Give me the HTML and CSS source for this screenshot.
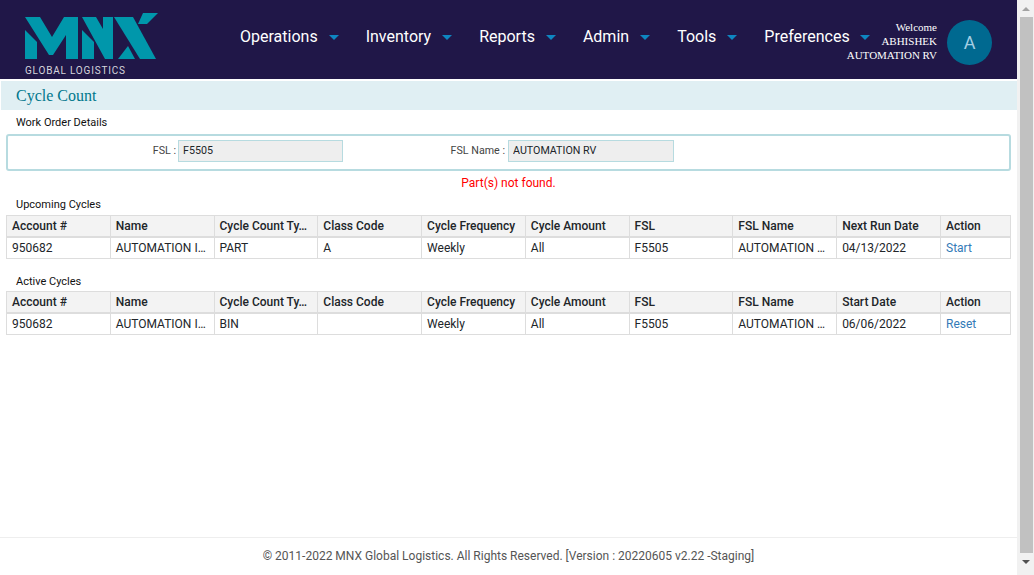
FILE: index.html
```html
<!DOCTYPE html>
<html lang="en">
<head>
    <meta charset="UTF-8">
    <meta name="viewport" content="width=device-width, initial-scale=1.0">
    <title>Cycle Count</title>
    <link rel="stylesheet" href="styles.css">
</head>
<body>
    <div class="page">
        <header class="topbar">
            <div class="logo">
                <svg class="logo-mark" width="134" height="47" viewBox="0 0 134 47">
                    <polygon fill="#0097ab" points="0,17 12,29 12,46 0,46"/>
                    <polygon fill="#0097ab" points="0,4 15,4 27,24 39,4 53,4 53,46 41,46 41,22 28,42 24,42"/>
                    <polygon fill="#0097ab" points="57,17 69,29 69,46 57,46"/>
                    <polygon fill="#0097ab" points="57,4 71,4 78,16 78,4 88,4 88,46 80,46"/>
                    <polygon fill="#0097ab" points="89,4 108,4 131,46 115,46"/>
                    <polygon fill="#0097ab" points="93,46 103,33 110,46"/>
                    <polygon fill="#0097ab" points="118,0 133,0 122,11 113,11"/>
                </svg>
                <span class="logo-text">GLOBAL LOGISTICS</span>
            </div>
            <nav class="menu">
                <a class="menu-item">Operations</a>
                <a class="menu-item">Inventory</a>
                <a class="menu-item">Reports</a>
                <a class="menu-item">Admin</a>
                <a class="menu-item">Tools</a>
                <a class="menu-item">Preferences</a>
            </nav>
            <div class="user">
                <div class="user-text">Welcome<br>ABHISHEK<br>AUTOMATION RV</div>
                <div class="avatar">A</div>
            </div>
        </header>

        <h1 class="title">Cycle Count</h1>

        <main class="content">
            <h2 class="section">Work Order Details</h2>
            <div class="details">
                <label class="fsl-label">FSL :</label>
                <input class="field" type="text" value="F5505" readonly>
                <label class="name-label">FSL Name :</label>
                <input class="field field-name" type="text" value="AUTOMATION RV" readonly>
            </div>
            <p class="error">Part(s) not found.</p>

            <h2 class="section">Upcoming Cycles</h2>
            <table class="grid">
                <thead>
                    <tr>
                        <th>Account #</th><th>Name</th><th>Cycle Count Ty…</th><th>Class Code</th><th>Cycle Frequency</th><th>Cycle Amount</th><th>FSL</th><th>FSL Name</th><th>Next Run Date</th><th class="col-action">Action</th>
                    </tr>
                </thead>
                <tbody>
                    <tr>
                        <td>950682</td><td>AUTOMATION I…</td><td>PART</td><td>A</td><td>Weekly</td><td>All</td><td>F5505</td><td>AUTOMATION …</td><td>04/13/2022</td><td><a class="action">Start</a></td>
                    </tr>
                </tbody>
            </table>

            <h2 class="section section-active">Active Cycles</h2>
            <table class="grid grid-active">
                <thead>
                    <tr>
                        <th>Account #</th><th>Name</th><th>Cycle Count Ty…</th><th>Class Code</th><th>Cycle Frequency</th><th>Cycle Amount</th><th>FSL</th><th>FSL Name</th><th>Start Date</th><th class="col-action">Action</th>
                    </tr>
                </thead>
                <tbody>
                    <tr>
                        <td>950682</td><td>AUTOMATION I…</td><td>BIN</td><td></td><td>Weekly</td><td>All</td><td>F5505</td><td>AUTOMATION …</td><td>06/06/2022</td><td><a class="action">Reset</a></td>
                    </tr>
                </tbody>
            </table>
        </main>

        <footer class="footer">© 2011-2022 MNX Global Logistics. All Rights Reserved. [Version : 20220605 v2.22 -Staging]</footer>
    </div>

    <div class="scrollbar">
        <div class="arrow arrow-up"></div>
        <div class="thumb"></div>
        <div class="arrow arrow-down"></div>
    </div>
</body>
</html>
```

FILE: styles.css
```css
html, body {
    height: 100%;
}
body {
    margin: 0;
    display: flex;
    overflow: hidden;
    font-family: Roboto, Arial, sans-serif;
    font-size: 12px;
    color: #212529;
    background-color: #fff;
}
.page {
    width: 1017px;
    height: 575px;
    display: flex;
    flex-direction: column;
}

/* header */
.topbar {
    height: 79px;
    display: flex;
    background-color: #201748;
    color: #fff;
}
.logo {
    flex: none;
    width: 240px;
    padding: 13px 0 0 25px;
    box-sizing: border-box;
}
.logo-mark {
    display: block;
}
.logo-text {
    display: block;
    margin-top: 4px;
    font-size: 10px;
    line-height: 14px;
    letter-spacing: 0.8px;
    color: #d5d5dc;
    white-space: nowrap;
}
/* the last caret runs in under the user text, as it does on the real page */
.menu {
    flex: none;
    width: 580px;
    display: flex;
    gap: 27px;
    padding-top: 27px;
    box-sizing: border-box;
}
.menu-item {
    font-size: 16px;
    line-height: 19px;
    color: #fff;
    white-space: nowrap;
}
.menu-item::after {
    content: "";
    display: inline-block;
    margin-left: 11px;
    vertical-align: 2px;
    border-left: 5px solid transparent;
    border-right: 5px solid transparent;
    border-top: 5px solid #0e86c1;
}
.menu-item:last-child::after {
    margin-left: 10px;
}
.user {
    flex: none;
    display: flex;
    gap: 10px;
    margin-left: auto;
    padding: 20px 25px 0 0;
}
.user-text {
    font-family: "Liberation Serif", serif;
    font-size: 11px;
    line-height: 14px;
    text-align: right;
    white-space: nowrap;
}
.avatar {
    width: 45px;
    height: 45px;
    border-radius: 50%;
    background-color: #006990;
    color: #a5cfe4;
    font-size: 18px;
    line-height: 45px;
    text-align: center;
}

/* title */
.title {
    margin: 2px 0 0 1px;
    height: 29px;
    padding-left: 15px;
    background-color: #e0eff3;
    color: #00778c;
    font-family: "Liberation Serif", serif;
    font-size: 16px;
    font-weight: normal;
    line-height: 29px;
}

.content {
    flex: 1;
    padding: 0 6px;
}
.section {
    margin: 0;
    padding-left: 10px;
    font-size: 11px;
    font-weight: normal;
    line-height: 13px;
    color: #111;
}
.content > .section:first-child {
    margin-top: 6px;
}
.details {
    display: flex;
    align-items: center;
    height: 37px;
    box-sizing: border-box;
    margin-top: 5px;
    padding-bottom: 3px;
    border: 2px solid #b7dbe0;
    border-radius: 3px;
    color: #444;
    font-size: 10.7px;
}
.fsl-label {
    width: 168px;
    margin: 0 2px 2px 0;
    text-align: right;
}
.name-label {
    width: 162px;
    margin: 0 3px 2px 0;
    text-align: right;
}
.field {
    width: 165px;
    height: 22px;
    box-sizing: border-box;
    padding: 0 4px 2px;
    border: 1px solid #b7dbe0;
    background-color: #eee;
    font-family: Roboto, Arial, sans-serif;
    font-size: 10.7px;
    color: #212529;
}
.field-name {
    width: 166px;
}
.error {
    margin: 5px 0 7px;
    font-size: 12px;
    line-height: 15px;
    color: #f00;
    text-align: center;
}
.grid {
    width: 1005px;
    margin-top: 4px;
    border-collapse: collapse;
    table-layout: fixed;
}
.grid-active {
    margin-top: 3px;
}
.grid th, .grid td {
    padding: 0 5px;
    border: 1px solid #ddd;
    font-size: 12px;
    text-align: left;
    white-space: nowrap;
    overflow: hidden;
}
.grid th {
    height: 20px;
    background-color: #f3f3f3;
    border-bottom-width: 2px;
    font-weight: 500;
}
.grid th.col-action {
    width: 59px;
}
.grid td {
    height: 20px;
}
.action {
    color: #337ab7;
}
.section-active {
    margin-top: 16px;
}

.footer {
    height: 37px;
    border-top: 1px solid #eee;
    text-align: center;
    line-height: 36px;
    color: #555;
}

/* scrollbar drawn by hand */
.scrollbar {
    width: 17px;
    height: 575px;
    background-color: #f1f1f1;
    display: flex;
    flex-direction: column;
    align-items: center;
}
.thumb {
    width: 13px;
    height: 536px;
    background-color: #c1c1c1;
    margin-left: 1px;
}
.arrow {
    height: 17px;
    display: flex;
    align-items: center;
}
.arrow-up::before {
    content: "";
    border-left: 4px solid transparent;
    border-right: 4px solid transparent;
    border-bottom: 4px solid #a3a3a3;
}
.arrow-down::before {
    content: "";
    border-left: 4px solid transparent;
    border-right: 4px solid transparent;
    border-top: 4px solid #505050;
}
```
